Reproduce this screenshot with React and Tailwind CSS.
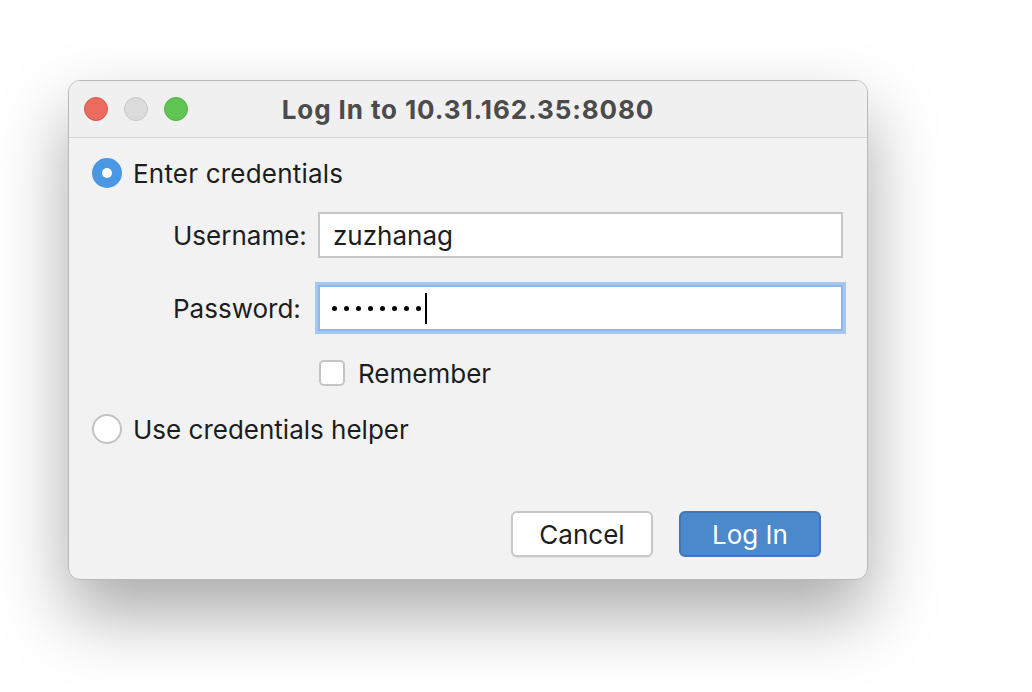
export default function App() {
    return (
        <div className="min-h-[692px] w-[1032px] bg-white pl-[68px] pt-[80px]" style={{ fontFamily: "Inter, 'Noto Sans', sans-serif" }}>
            <div className="w-[800px] h-[500px] rounded-[12px] bg-[#f2f2f2] border border-[#b9b9b9] shadow-[0_34px_70px_rgba(0,0,0,0.34)] flex flex-col overflow-hidden">
                <div className="relative h-[57px] shrink-0 flex items-center border-b border-[#d5d5d5] bg-[#f0f0f0]">
                    <div className="flex items-center gap-[16px] pl-[15px]">
                        <span className="w-[24px] h-[24px] rounded-full bg-[#ed6a5e] border border-[#d8564a]" />
                        <span className="w-[24px] h-[24px] rounded-full bg-[#dcdcdc] border border-[#c5c5c5]" />
                        <span className="w-[24px] h-[24px] rounded-full bg-[#61c554] border border-[#52ae45]" />
                    </div>
                    <div className="absolute inset-0 flex items-center justify-center text-[26px] font-bold tracking-[0.9px] text-[#4b4b4b] pointer-events-none">
                        Log In to 10.31.162.35:8080
                    </div>
                </div>

                <div className="flex-1 flex flex-col pl-[23px] pr-[24px] pt-[20px] text-[26px] text-[#1d1d1d]">
                    <div className="flex items-center h-[30px] gap-[11px]">
                        <span className="w-[30px] h-[30px] rounded-full bg-[#4a97e4] flex items-center justify-center">
                            <span className="w-[10px] h-[10px] rounded-full bg-white" />
                        </span>
                        <span className="tracking-[0.2px]">Enter credentials</span>
                    </div>

                    <div className="ml-[81px] mt-[24px] flex flex-col">
                        <div className="flex items-center h-[46px]">
                            <span className="w-[145px] shrink-0">Username:</span>
                            <div className="flex-1 h-[46px] bg-white border-2 border-[#c6c6c6] flex items-center pl-[13px]">zuzhanag</div>
                        </div>
                        <div className="flex items-center h-[46px] mt-[27px]">
                            <span className="w-[145px] shrink-0">Password:</span>
                            <div className="flex-1 h-[46px] bg-white border-2 border-[#8fb6e6] ring-[3px] ring-[#a6c8f0] flex items-center pl-[12px]">
                                <div className="flex items-center gap-[7px]">
                                    {[0, 1, 2, 3, 4, 5, 6, 7].map((i) => (
                                        <span key={i} className="w-[5px] h-[5px] rounded-full bg-black" />
                                    ))}
                                </div>
                                <span className="w-[2px] h-[31px] bg-black ml-[4px]" />
                            </div>
                        </div>
                        <div className="flex items-center h-[26px] mt-[29px] ml-[146px] gap-[13px]">
                            <span className="w-[26px] h-[26px] rounded-[5px] bg-white border-2 border-[#c4c4c4]" />
                            <span>Remember</span>
                        </div>
                    </div>

                    <div className="flex items-center h-[30px] gap-[11px] mt-[28px]">
                        <span className="w-[30px] h-[30px] rounded-full bg-white border-2 border-[#c2c2c2]" />
                        <span>Use credentials helper</span>
                    </div>

                    <div className="flex justify-end gap-[26px] mt-auto mb-[22px] pr-[22px]">
                        <button className="w-[142px] h-[46px] rounded-[6px] bg-white border-2 border-[#c8c8c8] text-[#1d1d1d] shadow-[0_1px_1px_rgba(0,0,0,0.08)]">Cancel</button>
                        <button className="w-[142px] h-[46px] rounded-[6px] bg-[#4b89cb] border-2 border-[#3f78b8] text-white">Log In</button>
                    </div>
                </div>
            </div>
        </div>
    );
}
